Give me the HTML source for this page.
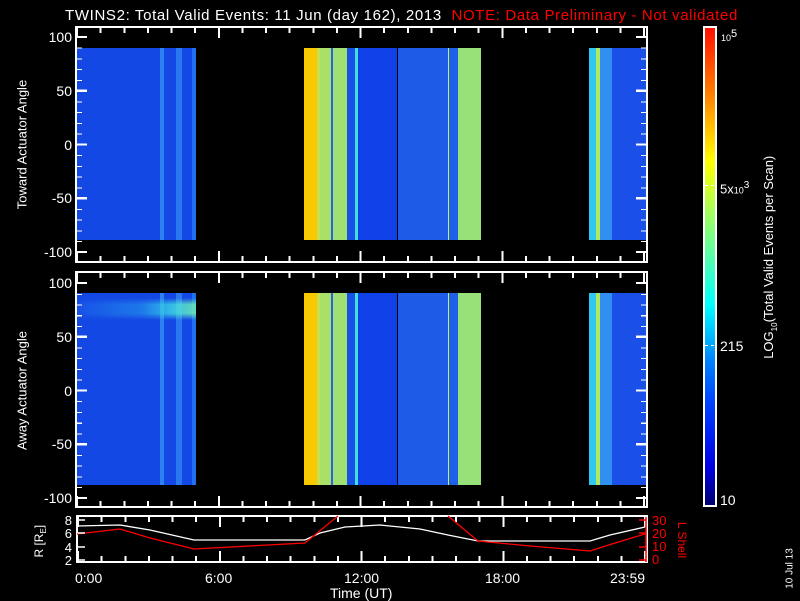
<!DOCTYPE html>
<html><head><style>
body{margin:0;background:#000;width:800px;height:600px;overflow:hidden;position:relative;font-family:"Liberation Sans",sans-serif;color:#fff}
div,span{position:absolute}
.box{border:2px solid #fff;box-sizing:border-box}
.lbl{font-size:14px;line-height:14px;text-align:right;width:40px}
.rot{transform:rotate(-90deg);transform-origin:center;white-space:nowrap;font-size:13px;text-align:center}
.b1{background:linear-gradient(to right,#1448e4 0 84px,#2c80f0 84px 88px,#1448e4 88px 100px,#2a78f0 100px 106px,#1448e4 106px 116px,#2070f0 116px)}
.b2{background:linear-gradient(to right,#f8c800 0 13px,#c8e050 13px 16px,#a8e068 16px 27px,#2860f0 27px 29px,#a0e070 29px 43px,#1850e8 43px 51px,#40e0e0 51px 54px,#1040e8 54px 93px,#000 93px 94px,#1e5ce8 94px 144px,#c0f060 144px 145px,#2060e8 145px 154px,#98e078 154px)}
.b3{background:linear-gradient(to right,#30c8f0 0 7px,#b0e860 7px 11px,#3090f0 11px 23px,#1a50e8 23px)}
.tx{height:5px;background:repeating-linear-gradient(to right,#fff 0 2px,transparent 2px 23.63px)}
.txM{height:10px;background:repeating-linear-gradient(to right,#fff 0 2px,transparent 2px 141.75px)}
.ty{width:5px;background:repeating-linear-gradient(to bottom,#fff 0 1px,transparent 1px 10.75px)}
.tyM{width:10px;background:repeating-linear-gradient(to bottom,#fff 0 2px,transparent 2px 53.75px)}
</style></head><body>
<div style="left:65px;top:7px;font-size:15px;white-space:nowrap;letter-spacing:0.65px">TWINS2: Total Valid Events: 11 Jun (day 162), 2013 &nbsp;<span style="position:static;color:#f00">NOTE: Data Preliminary - Not validated</span></div>

<!-- panel 1 -->
<div class="b1" style="left:76px;top:48px;width:120px;height:192px"></div>
<div class="b2" style="left:304px;top:48px;width:177px;height:192px"></div>
<div class="b3" style="left:589px;top:48px;width:57px;height:192px"></div>
<div class="box" style="left:75px;top:26px;width:573px;height:237px"></div>
<div class="tx" style="left:76px;top:28px;width:570px"></div>
<div class="txM" style="left:76px;top:28px;width:570px"></div>
<div class="tx" style="left:76px;top:256px;width:570px"></div>
<div class="txM" style="left:76px;top:251px;width:570px"></div>
<div class="ty" style="left:77px;top:37px;height:216px"></div>
<div class="tyM" style="left:77px;top:36px;height:218px"></div>
<div class="ty" style="left:641px;top:37px;height:216px"></div>
<div class="tyM" style="left:636px;top:36px;height:218px"></div>
<div class="lbl" style="left:32px;top:30px">100</div>
<div class="lbl" style="left:32px;top:84px">50</div>
<div class="lbl" style="left:32px;top:138px">0</div>
<div class="lbl" style="left:32px;top:191px">-50</div>
<div class="lbl" style="left:32px;top:245px">-100</div>
<div class="rot" style="left:-48px;top:137px;width:140px">Toward Actuator Angle</div>

<!-- panel 2 -->
<div class="b1" style="left:76px;top:293px;width:120px;height:192px"></div>
<div style="left:76px;top:298px;width:120px;height:22px;background:linear-gradient(to right,rgba(40,120,240,.2),rgba(40,170,240,.5) 55%,rgba(60,220,230,.8) 80%,rgba(110,230,180,.9));-webkit-mask:linear-gradient(to bottom,transparent,#000 30%,#000 70%,transparent);mask:linear-gradient(to bottom,transparent,#000 30%,#000 70%,transparent)"></div>
<div class="b2" style="left:304px;top:293px;width:177px;height:192px"></div>
<div class="b3" style="left:589px;top:293px;width:57px;height:192px"></div>
<div class="box" style="left:75px;top:271px;width:573px;height:237px"></div>
<div class="tx" style="left:76px;top:273px;width:570px"></div>
<div class="txM" style="left:76px;top:273px;width:570px"></div>
<div class="tx" style="left:76px;top:501px;width:570px"></div>
<div class="txM" style="left:76px;top:496px;width:570px"></div>
<div class="ty" style="left:77px;top:283px;height:216px"></div>
<div class="tyM" style="left:77px;top:282px;height:218px"></div>
<div class="ty" style="left:641px;top:283px;height:216px"></div>
<div class="tyM" style="left:636px;top:282px;height:218px"></div>
<div class="lbl" style="left:32px;top:276px">100</div>
<div class="lbl" style="left:32px;top:330px">50</div>
<div class="lbl" style="left:32px;top:384px">0</div>
<div class="lbl" style="left:32px;top:437px">-50</div>
<div class="lbl" style="left:32px;top:491px">-100</div>
<div class="rot" style="left:-48px;top:383px;width:140px">Away Actuator Angle</div>

<!-- colorbar -->
<div style="left:703px;top:26px;width:14px;height:481px;box-sizing:border-box;border:2px solid #fff;background:linear-gradient(to top,#000070 0,#0000e0 8%,#0040ff 21%,#0080ff 30%,#00ffff 42%,#80ff80 57%,#ffff00 72%,#ff8000 86%,#ff1000 100%)"></div>
<div style="left:705px;top:185px;width:10px;height:1px;background:repeating-linear-gradient(to right,#fff 0 3px,transparent 3px 6px)"></div>
<div style="left:705px;top:345px;width:10px;height:1px;background:repeating-linear-gradient(to right,#fff 0 3px,transparent 3px 6px)"></div>
<div style="left:721px;top:28px;font-size:9px">10<sup style="font-size:11px">5</sup></div>
<div style="left:720px;top:180px;font-size:13px">5x<span style="position:static;font-size:9px">10</span><sup style="font-size:10px">3</sup></div>
<div style="left:720px;top:338px;font-size:14px">215</div>
<div style="left:720px;top:492px;font-size:14px">10</div>
<div class="rot" style="left:670px;top:250px;width:200px">LOG<sub style="font-size:8px">10</sub>(Total Valid Events per Scan)</div>
<div class="rot" style="left:760px;top:563px;width:60px;font-size:10px">10 Jul 13</div>

<!-- bottom panel -->
<div class="box" style="left:76px;top:515px;width:572px;height:48px"></div>
<div class="tx" style="left:77px;top:517px;width:570px"></div>
<div class="txM" style="left:77px;top:517px;width:570px"></div>
<div class="tx" style="left:77px;top:556px;width:570px"></div>
<div class="txM" style="left:77px;top:551px;width:570px"></div>
<svg style="position:absolute;left:0;top:0" width="800" height="600">
<polyline fill="none" stroke="#fff" stroke-width="1.3" points="77,526 120,525 150,530 194,540 305,540 320,533 345,527 380,525 420,529 448,535 478,541 590,541 610,535 645,527"/>
<polyline fill="none" stroke="#f00" stroke-width="1.3" points="77,534 120,529 150,538 194,549 305,543 338,516"/>
<polyline fill="none" stroke="#f00" stroke-width="1.3" points="448,516 478,541 530,546 590,551 615,543 645,534"/>
<path stroke="#fff" stroke-width="1.5" d="M78,520h7M78,533h7M78,547h7M78,560h7"/>
<path stroke="#f00" stroke-width="1.5" d="M646,517v45M646,520h-7M646,533h-7M646,547h-7M646,560h-7"/>
</svg>
<div class="lbl" style="left:32px;top:514px;font-size:13px">8</div>
<div class="lbl" style="left:32px;top:527px;font-size:13px">6</div>
<div class="lbl" style="left:32px;top:541px;font-size:13px">4</div>
<div class="lbl" style="left:32px;top:554px;font-size:13px">2</div>
<div class="rot" style="left:20px;top:533px;width:40px;font-size:12px">R [R<sub style="font-size:8px">E</sub>]</div>
<div style="left:652px;top:514px;font-size:13px;color:#f00;line-height:13px">30<br>20<br>10<br>0</div>
<div class="rot" style="left:657px;top:533px;width:50px;font-size:12px;color:#f00;transform:rotate(90deg)">L Shell</div>
<div style="left:75px;top:570px;font-size:14px">0:00</div>
<div style="left:205px;top:570px;font-size:14px">6:00</div>
<div style="left:344px;top:570px;font-size:14px">12:00</div>
<div style="left:485px;top:570px;font-size:14px">18:00</div>
<div style="left:610px;top:570px;font-size:14px">23:59</div>
<div style="left:330px;top:585px;font-size:14px">Time (UT)</div>
</body></html>
